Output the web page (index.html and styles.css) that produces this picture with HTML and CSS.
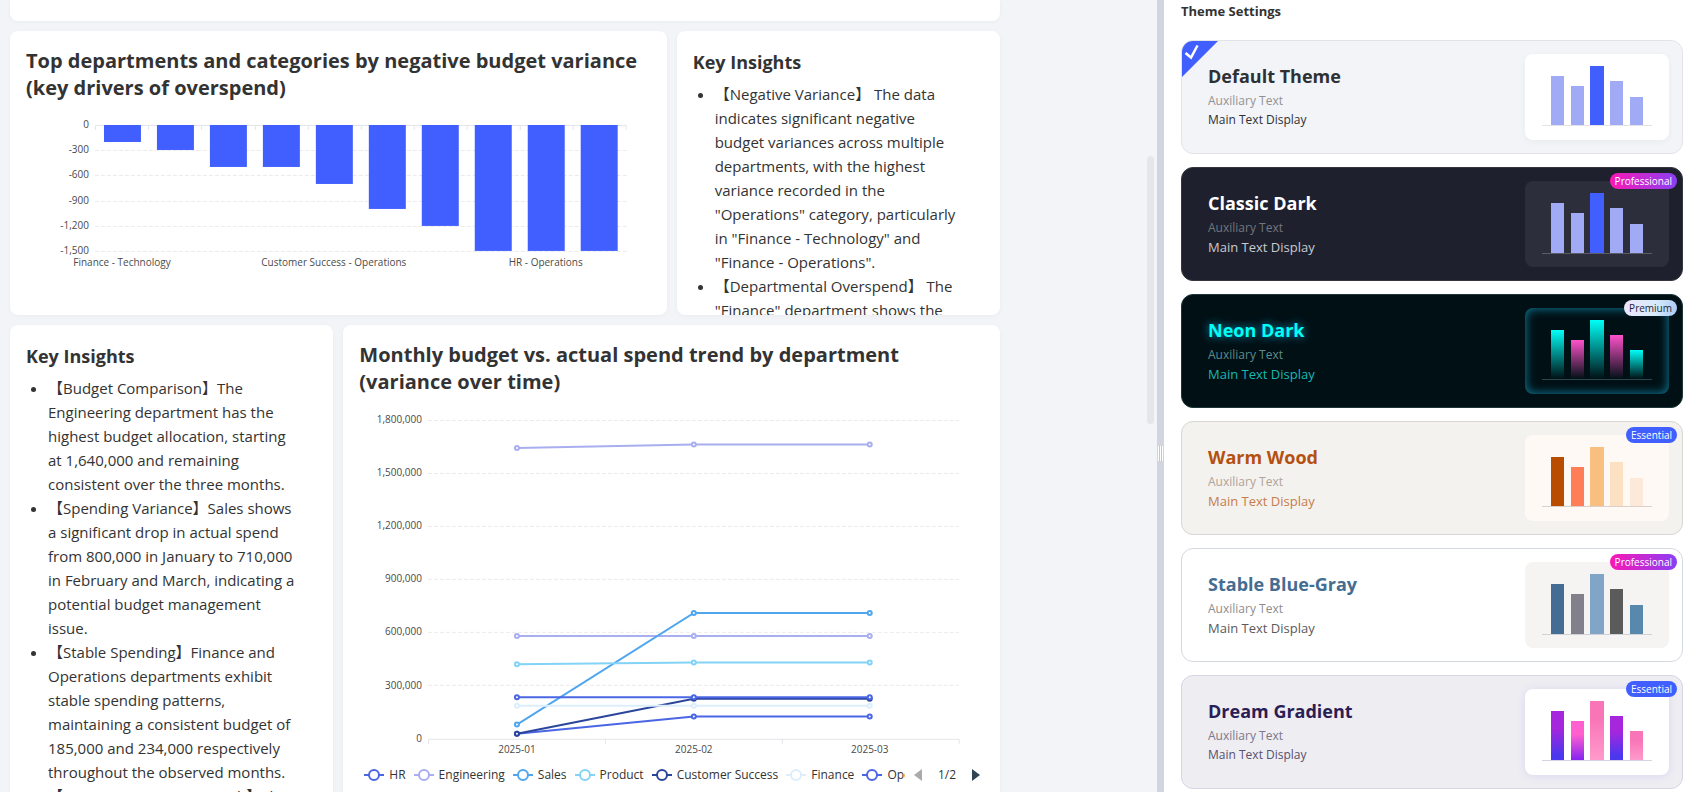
FILE: index.html
```html
<!DOCTYPE html>
<html lang="en">
<head>
<meta charset="utf-8">
<title>Budget Dashboard</title>
<link rel="stylesheet" href="styles.css">
</head>
<body>
<div class="app">
  <main class="workspace">
    <div class="board">
      <section class="card card-previous" aria-hidden="true"></section>

      <section class="card card-wide">
        <h2 class="chart-title">Top departments and categories by negative budget variance (key drivers of overspend)</h2>
        <svg class="chart" viewBox="0 0 625 170" role="img" aria-label="Negative budget variance by department">
          <g class="grid-line">
            <path d="M69 49.5H601M69 74.5H601M69 100.5H601M69 125.5H601M69 150.5H601"/>
          </g>
          <path class="axis-line" d="M69.5 29V24.5H600.5V29M122.5 24v5M175.5 24v5M229.5 24v5M282.5 24v5M335.5 24v5M388.5 24v5M441.5 24v5M494.5 24v5M547.5 24v5"/>
          <g class="variance-bars">
            <rect x="78" y="24" width="37" height="17"/>
            <rect x="131" y="24" width="37" height="25"/>
            <rect x="184" y="24" width="37" height="42"/>
            <rect x="237" y="24" width="37" height="42"/>
            <rect x="290" y="24" width="37" height="59"/>
            <rect x="343" y="24" width="37" height="84"/>
            <rect x="396" y="24" width="37" height="101"/>
            <rect x="449" y="24" width="37" height="126"/>
            <rect x="502" y="24" width="37" height="126"/>
            <rect x="555" y="24" width="37" height="126"/>
          </g>
          <g class="axis-text axis-text-y">
            <text x="63" y="27">0</text>
            <text x="63" y="52">-300</text>
            <text x="63" y="77">-600</text>
            <text x="63" y="103">-900</text>
            <text x="63" y="128">-1,200</text>
            <text x="63" y="153">-1,500</text>
          </g>
          <g class="axis-text axis-text-x">
            <text x="96" y="165">Finance - Technology</text>
            <text x="308" y="165">Customer Success - Operations</text>
            <text x="520" y="165">HR - Operations</text>
          </g>
        </svg>
      </section>

      <section class="card card-narrow">
        <h2 class="insight-title">Key Insights</h2>
        <ul class="insights">
          <li>【Negative Variance】 The data indicates significant negative budget variances across multiple departments, with the highest variance recorded in the "Operations" category, particularly in "Finance - Technology" and "Finance - Operations".</li>
          <li>【Departmental Overspend】 The "Finance" department shows the</li>
        </ul>
      </section>

      <section class="card card-narrow">
        <h2 class="insight-title">Key Insights</h2>
        <ul class="insights">
          <li>【Budget Comparison】The Engineering department has the highest budget allocation, starting at 1,640,000 and remaining consistent over the three months.</li>
          <li>【Spending Variance】Sales shows a significant drop in actual spend from 800,000 in January to 710,000 in February and March, indicating a potential budget management issue.</li>
          <li>【Stable Spending】Finance and Operations departments exhibit stable spending patterns, maintaining a consistent budget of 185,000 and 234,000 respectively throughout the observed months.</li>
          <li>【Customer Success Growth】The</li>
        </ul>
      </section>

      <section class="card card-wide">
        <h2 class="chart-title">Monthly budget vs. actual spend trend by department (variance over time)</h2>
        <svg class="chart" viewBox="0 0 625 368" role="img" aria-label="Monthly budget and actual spend by department">
          <g class="grid-line">
            <path d="M69 25.5H600M69 78.5H600M69 131.5H600M69 184.5H600M69 237.5H600M69 290.5H600"/>
          </g>
          <path class="axis-line" d="M69.5 349V344.5H600.5V349M246.5 344v5M423.5 344v5"/>
          <g class="axis-text axis-text-y">
            <text x="63" y="28">1,800,000</text>
            <text x="63" y="81">1,500,000</text>
            <text x="63" y="134">1,200,000</text>
            <text x="63" y="187">900,000</text>
            <text x="63" y="240">600,000</text>
            <text x="63" y="294">300,000</text>
            <text x="63" y="347">0</text>
          </g>
          <g class="axis-text axis-text-x">
            <text x="158" y="358">2025-01</text>
            <text x="335" y="358">2025-02</text>
            <text x="511" y="358">2025-03</text>
          </g>
          <g class="series s-engineering">
            <path d="M158 53L335 49.5H511"/><circle cx="158" cy="53" r="2"/><circle cx="335" cy="49.500" r="2"/><circle cx="511" cy="49.500" r="2"/>
            <path d="M158 241H511"/><circle cx="158" cy="241" r="2"/><circle cx="335" cy="241" r="2"/><circle cx="511" cy="241" r="2"/>
          </g>
          <g class="series s-hr">
            <path d="M158 339L335 321.7H511"/><circle cx="158" cy="339" r="2"/><circle cx="335" cy="321.7" r="2"/><circle cx="511" cy="321.7" r="2"/>
          </g>
          <g class="series s-sales">
            <path d="M158 329.7L335 218H511"/><circle cx="158" cy="329.7" r="2"/><circle cx="335" cy="218" r="2"/><circle cx="511" cy="218" r="2"/>
          </g>
          <g class="series s-product">
            <path d="M158 269.5L335 267.7H511"/><circle cx="158" cy="269.5" r="2"/><circle cx="335" cy="267.7" r="2"/><circle cx="511" cy="267.7" r="2"/>
          </g>
          <g class="series s-success">
            <path d="M158 339L335 304H511"/><circle cx="158" cy="339" r="2"/><circle cx="335" cy="304" r="2"/><circle cx="511" cy="304" r="2"/>
          </g>
          <g class="series s-finance">
            <path d="M158 311H511"/><circle cx="158" cy="311" r="2"/><circle cx="335" cy="311" r="2"/><circle cx="511" cy="311" r="2"/>
          </g>
          <g class="series s-operations">
            <path d="M158 302.5H511"/><circle cx="158" cy="302.5" r="2"/><circle cx="335" cy="302.5" r="2"/><circle cx="511" cy="302.5" r="2"/>
          </g>
        </svg>
        <div class="legend">
          <ul class="legend-items">
            <li><svg class="legend-mark s-hr" viewBox="0 0 20 14"><path d="M0 7H20"/><circle cx="10" cy="7" r="5"/></svg>HR</li>
            <li><svg class="legend-mark s-engineering" viewBox="0 0 20 14"><path d="M0 7H20"/><circle cx="10" cy="7" r="5"/></svg>Engineering</li>
            <li><svg class="legend-mark s-sales" viewBox="0 0 20 14"><path d="M0 7H20"/><circle cx="10" cy="7" r="5"/></svg>Sales</li>
            <li><svg class="legend-mark s-product" viewBox="0 0 20 14"><path d="M0 7H20"/><circle cx="10" cy="7" r="5"/></svg>Product</li>
            <li><svg class="legend-mark s-success" viewBox="0 0 20 14"><path d="M0 7H20"/><circle cx="10" cy="7" r="5"/></svg>Customer Success</li>
            <li><svg class="legend-mark s-finance" viewBox="0 0 20 14"><path d="M0 7H20"/><circle cx="10" cy="7" r="5"/></svg>Finance</li>
            <li><svg class="legend-mark s-operations" viewBox="0 0 20 14"><path d="M0 7H20"/><circle cx="10" cy="7" r="5"/></svg>Operations</li>
          </ul>
          <div class="pager">
            <button class="pager-button" type="button" aria-label="Previous" disabled><svg viewBox="0 0 8 12"><path d="M8 0V12L0 6Z" fill="#aaa"/></svg></button>
            <span>1/2</span>
            <button class="pager-button" type="button" aria-label="Next"><svg viewBox="0 0 8 12"><path d="M0 0V12L8 6Z" fill="#2f4554"/></svg></button>
          </div>
        </div>
      </section>
    </div>
    <div class="scroll-thumb"></div>
  </main>

  <div class="splitter" role="separator" aria-orientation="vertical"><span class="splitter-grip"></span></div>

  <aside class="settings">
    <h1 class="settings-title">Theme Settings</h1>
    <div class="themes">
      <button type="button" class="theme theme-default" aria-pressed="true">
        <svg class="theme-check" viewBox="0 0 36 36"><path d="M0 0H36L0 36Z" fill="#415fff"/><path d="M3.5 12L9 16.500L15.500 4.500" fill="none" stroke="#fff" stroke-width="2.500"/></svg>
        <span class="theme-copy"><span class="theme-name">Default Theme</span><span class="theme-aux">Auxiliary Text</span><span class="theme-main">Main Text Display</span></span>
        <span class="preview"><svg viewBox="0 0 144 86"><rect class="b1" x="26" y="22" width="13" height="49"/><rect class="b2" x="46" y="32" width="13" height="39"/><rect class="b3" x="65" y="12" width="14" height="59"/><rect class="b4" x="85" y="27" width="13" height="44"/><rect class="b5" x="105" y="43" width="13" height="28"/><path class="base" d="M17 71.5H127"/></svg></span>
      </button>

      <button type="button" class="theme theme-classic" aria-pressed="false">
        <span class="theme-copy"><span class="theme-name">Classic Dark</span><span class="theme-aux">Auxiliary Text</span><span class="theme-main">Main Text Display</span></span>
        <span class="preview"><svg viewBox="0 0 144 86"><rect class="b1" x="26" y="22" width="13" height="50"/><rect class="b2" x="46" y="32" width="13" height="40"/><rect class="b3" x="65" y="12" width="14" height="60"/><rect class="b4" x="85" y="27" width="13" height="45"/><rect class="b5" x="105" y="43" width="13" height="29"/><path class="base" d="M17 72.5H127"/></svg></span>
        <span class="badge badge-professional">Professional</span>
      </button>

      <button type="button" class="theme theme-neon" aria-pressed="false">
        <span class="theme-copy"><span class="theme-name">Neon Dark</span><span class="theme-aux">Auxiliary Text</span><span class="theme-main">Main Text Display</span></span>
        <span class="preview"><svg viewBox="0 0 144 86">
          <defs>
            <linearGradient id="cyan" x1="0" y1="0" x2="0" y2="1"><stop offset="0" stop-color="#00fff7"/><stop offset="1" stop-color="#00fff7" stop-opacity="0"/></linearGradient>
            <linearGradient id="magenta" x1="0" y1="0" x2="0" y2="1"><stop offset="0" stop-color="#ff52cb"/><stop offset="1" stop-color="#ff52cb" stop-opacity="0"/></linearGradient>
          </defs>
          <rect fill="url(#cyan)" x="26" y="22" width="13" height="49"/><rect fill="url(#magenta)" x="46" y="32" width="13" height="39"/><rect fill="url(#cyan)" x="65" y="12" width="14" height="59"/><rect fill="url(#magenta)" x="85" y="27" width="13" height="44"/><rect fill="url(#cyan)" x="105" y="42" width="13" height="29"/><path class="base" d="M17 71.500H127"/></svg></span>
        <span class="badge badge-premium">Premium</span>
      </button>

      <button type="button" class="theme theme-wood" aria-pressed="false">
        <span class="theme-copy"><span class="theme-name">Warm Wood</span><span class="theme-aux">Auxiliary Text</span><span class="theme-main">Main Text Display</span></span>
        <span class="preview"><svg viewBox="0 0 144 86"><rect class="b1" x="26" y="22" width="13" height="49"/><rect class="b2" x="46" y="32" width="13" height="39"/><rect class="b3" x="65" y="12" width="14" height="59"/><rect class="b4" x="85" y="27" width="13" height="44"/><rect class="b5" x="105" y="43" width="13" height="28"/><path class="base" d="M17 71.500H127"/></svg></span>
        <span class="badge badge-essential">Essential</span>
      </button>

      <button type="button" class="theme theme-slate" aria-pressed="false">
        <span class="theme-copy"><span class="theme-name">Stable Blue-Gray</span><span class="theme-aux">Auxiliary Text</span><span class="theme-main">Main Text Display</span></span>
        <span class="preview"><svg viewBox="0 0 144 86"><rect class="b1" x="26" y="22" width="13" height="50"/><rect class="b2" x="46" y="32" width="13" height="40"/><rect class="b3" x="65" y="12" width="14" height="60"/><rect class="b4" x="85" y="27" width="13" height="45"/><rect class="b5" x="105" y="43" width="13" height="29"/><path class="base" d="M17 72.500H127"/></svg></span>
        <span class="badge badge-professional">Professional</span>
      </button>

      <button type="button" class="theme theme-dream" aria-pressed="false">
        <span class="theme-copy"><span class="theme-name">Dream Gradient</span><span class="theme-aux">Auxiliary Text</span><span class="theme-main">Main Text Display</span></span>
        <span class="preview"><svg viewBox="0 0 144 86">
          <defs>
            <linearGradient id="violet" x1="0" y1="0" x2="0" y2="1"><stop offset="0.350" stop-color="#a626dd"/><stop offset="0.900" stop-color="#4b38ee"/></linearGradient>
            <linearGradient id="orchid" x1="0" y1="0" x2="0" y2="1"><stop offset="0.350" stop-color="#ff5fcf"/><stop offset="1" stop-color="#8523f0"/></linearGradient>
            <linearGradient id="rose" x1="0" y1="0" x2="0" y2="1"><stop offset="0.300" stop-color="#f875b8"/><stop offset="1" stop-color="#ff9acb"/></linearGradient>
          </defs>
          <rect fill="url(#violet)" x="26" y="22" width="13" height="49"/><rect fill="url(#orchid)" x="46" y="32" width="13" height="39"/><rect fill="url(#rose)" x="65" y="12" width="14" height="59"/><rect fill="url(#violet)" x="85" y="27" width="13" height="44"/><rect fill="url(#rose)" x="105" y="42" width="13" height="29"/><path class="base" d="M17 71.500H127"/></svg></span>
        <span class="badge badge-essential">Essential</span>
      </button>
    </div>
  </aside>
</div>
</body>
</html>
```
FILE: styles.css
```css
* { box-sizing: border-box; }

body {
  margin: 0;
  font-family: "Open Sans", "Noto Sans CJK SC", sans-serif;
  color: #333;
  background: #fff;
}

h1, h2, ul { margin: 0; padding: 0; }

.app {
  display: flex;
  height: 100vh;
  overflow: hidden;
}

/* Dashboard */

.workspace {
  position: relative;
  flex: 1;
  min-width: 0;
  overflow: hidden;
  padding: 0 157px 0 10px;
  background: #f2f4f8;
}

.board {
  display: grid;
  grid-template-columns: repeat(12, minmax(0, 1fr));
  grid-template-rows: 21px 284px 560px;
  gap: 10px;
}

.card {
  overflow: hidden;
  padding: 16px;
  background: #fff;
  border-radius: 8px;
  box-shadow: 0 1px 4px rgba(30, 40, 60, 0.04);
}

.card-previous {
  grid-column: span 12;
  padding: 0;
  border-radius: 0 0 8px 8px;
}

.card-wide { grid-column: span 8; }
.card-narrow { grid-column: span 4; padding-right: 34px; }

.chart-title {
  font-size: 20px;
  line-height: 27px;
  font-weight: 700;
}

.insight-title {
  font-size: 18px;
  line-height: 30px;
  font-weight: 700;
}

.insights {
  margin-top: 5px;
  padding-left: 22px;
  font-size: 15px;
  line-height: 24px;
}

.chart {
  display: block;
  width: 100%;
  height: auto;
}

.grid-line { fill: none; stroke: #ebebeb; stroke-dasharray: 4 2; }
.axis-line { fill: none; stroke: #e3e5ea; }
.variance-bars { fill: #415fff; }
.axis-text { font-size: 10px; fill: #4a4a4a; }
.axis-text-y { text-anchor: end; }
.axis-text-x { text-anchor: middle; }

.series, .legend-mark {
  fill: #fff;
  stroke: currentColor;
  stroke-width: 2;
}
.series path { fill: none; }

.s-hr, .s-operations { color: #4a66e4; }
.s-engineering { color: #a9aef0; }
.s-sales { color: #4fa6ee; }
.s-product { color: #82d3f6; }
.s-success { color: #2a459c; }
.s-finance { color: #dceefc; }

.legend {
  display: flex;
  align-items: center;
  gap: 9px;
  height: 24px;
  padding: 0 4px 0 5px;
  font-size: 12px;
}

.legend-items {
  display: flex;
  flex: 1;
  gap: 8px;
  min-width: 0;
  overflow: hidden;
  list-style: none;
}

.legend-items li {
  display: flex;
  flex: none;
  align-items: center;
  gap: 5px;
}

.legend-mark { width: 20px; height: 14px; }

.pager { display: flex; align-items: center; gap: 16px; }

.pager-button {
  display: flex;
  padding: 0;
  border: 0;
  background: none;
}
.pager-button svg { width: 8px; height: 12px; }

.scroll-thumb {
  position: absolute;
  top: 156px;
  right: 3px;
  width: 7px;
  height: 268px;
  border-radius: 4px;
  background: #e5e6e9;
}

.splitter {
  display: flex;
  flex: none;
  align-items: center;
  justify-content: center;
  width: 7px;
  padding-top: 115px;
  background: #d2d5de;
}

.splitter-grip {
  width: 5px;
  height: 15px;
  background: repeating-linear-gradient(90deg, #fff 0 1px, #c3c6d2 1px 2px);
}

/* Theme settings */

.settings {
  flex: 0 0 31%;
  padding: 2px 4px 0 17px;
  overflow: hidden;
}

.settings-title {
  font-size: 13px;
  line-height: 18px;
  font-weight: 700;
}

.themes {
  display: flex;
  flex-direction: column;
  gap: 13px;
  margin-top: 20px;
}

.theme {
  position: relative;
  display: flex;
  align-items: center;
  justify-content: space-between;
  height: 114px;
  padding: 0 13px 0 26px;
  overflow: hidden;
  border: 1px solid;
  border-radius: 12px;
  font-family: inherit;
  text-align: left;
}

.theme-copy { display: flex; flex-direction: column; padding-bottom: 2px; }
.theme-name { margin-bottom: 2px; font-size: 18px; line-height: 28px; font-weight: 700; }
.theme-aux { font-size: 12px; line-height: 18px; }
.theme-main { font-size: 13px; line-height: 20px; }
.theme-default .theme-main, .theme-dream .theme-main { font-size: 12px; }

.theme-check {
  position: absolute;
  top: 0;
  left: 0;
  width: 36px;
  height: 36px;
}

.preview {
  width: 144px;
  height: 86px;
  border-radius: 8px;
}
.preview svg { display: block; width: 100%; height: 100%; }
.base { fill: none; stroke: currentColor; }

.badge {
  position: absolute;
  top: 5px;
  right: 5px;
  padding: 0 5px;
  border-radius: 8px;
  font-size: 10px;
  line-height: 16px;
  color: #fff;
}
.badge-professional { background: linear-gradient(90deg, #fa18b4, #8a3ff5); }
.badge-premium { background: linear-gradient(100deg, #efe6fb, #d5ebfb 60%, #a9c8f6); color: #1f1f33; }
.badge-essential { background: #415fff; }

.theme-default { background: #f2f4f8; border-color: #e2e4e8; color: #2f3033; }
.theme-default .theme-aux { color: #929292; }
.theme-default .preview { background: #fff; color: #e3e0ea; box-shadow: 0 2px 6px rgba(0, 0, 0, 0.04); }
.theme-default .preview rect, .theme-classic .preview rect { fill: #a0aaf5; }
.theme-default .preview .b3, .theme-classic .preview .b3 { fill: #415fff; }

.theme-classic { background: #1e212d; border-color: #34363f; color: #fff; }
.theme-classic .theme-aux { color: #73757e; }
.theme-classic .theme-main { color: #c9cad1; }
.theme-classic .preview { background: #2d2e3b; color: #5b5c66; }

.theme-neon { background: #001015; border-color: #1c3538; color: #00fff7; }
.theme-neon .theme-name { text-shadow: 0 0 8px rgba(0, 200, 255, 0.8); }
.theme-neon .theme-aux { color: #5f8b8b; }
.theme-neon .theme-main { color: #18b9b3; }
.theme-neon .preview { background: #001015; color: #29474b; box-shadow: inset 0 0 10px 1px #0f7390; }

.theme-wood { background: #f4f2ef; border-color: #d8d7d6; color: #b55110; }
.theme-wood .theme-aux { color: #b0a397; }
.theme-wood .theme-main { color: #c67c4c; }
.theme-wood .preview { background: #fef9f4; color: #ddd0cb; }
.theme-wood .b1 { fill: #b84d00; }
.theme-wood .b2 { fill: #ff7e57; }
.theme-wood .b3 { fill: #f8bf80; }
.theme-wood .b4 { fill: #fce0c2; }
.theme-wood .b5 { fill: #fde9d9; }

.theme-slate { background: #fff; border-color: #d4d8df; color: #456d92; }
.theme-slate .theme-aux { color: #8d8d8d; }
.theme-slate .theme-main { color: #5a5a5a; }
.theme-slate .preview { background: #f6f4f2; color: #cfd3d9; }
.theme-slate .b1 { fill: #456c92; }
.theme-slate .b2 { fill: #82808b; }
.theme-slate .b3 { fill: #81a5c6; }
.theme-slate .b4 { fill: #5b5b5b; }
.theme-slate .b5 { fill: #5888ac; }

.theme-dream { background: #eeedf2; border-color: #d5d6e2; color: #2b1d55; }
.theme-dream .theme-aux { color: #7c778b; }
.theme-dream .theme-main { color: #57506f; }
.theme-dream .preview { background: #fff; color: #d8d2e2; box-shadow: 0 1px 8px rgba(110, 90, 230, 0.14); }
```
